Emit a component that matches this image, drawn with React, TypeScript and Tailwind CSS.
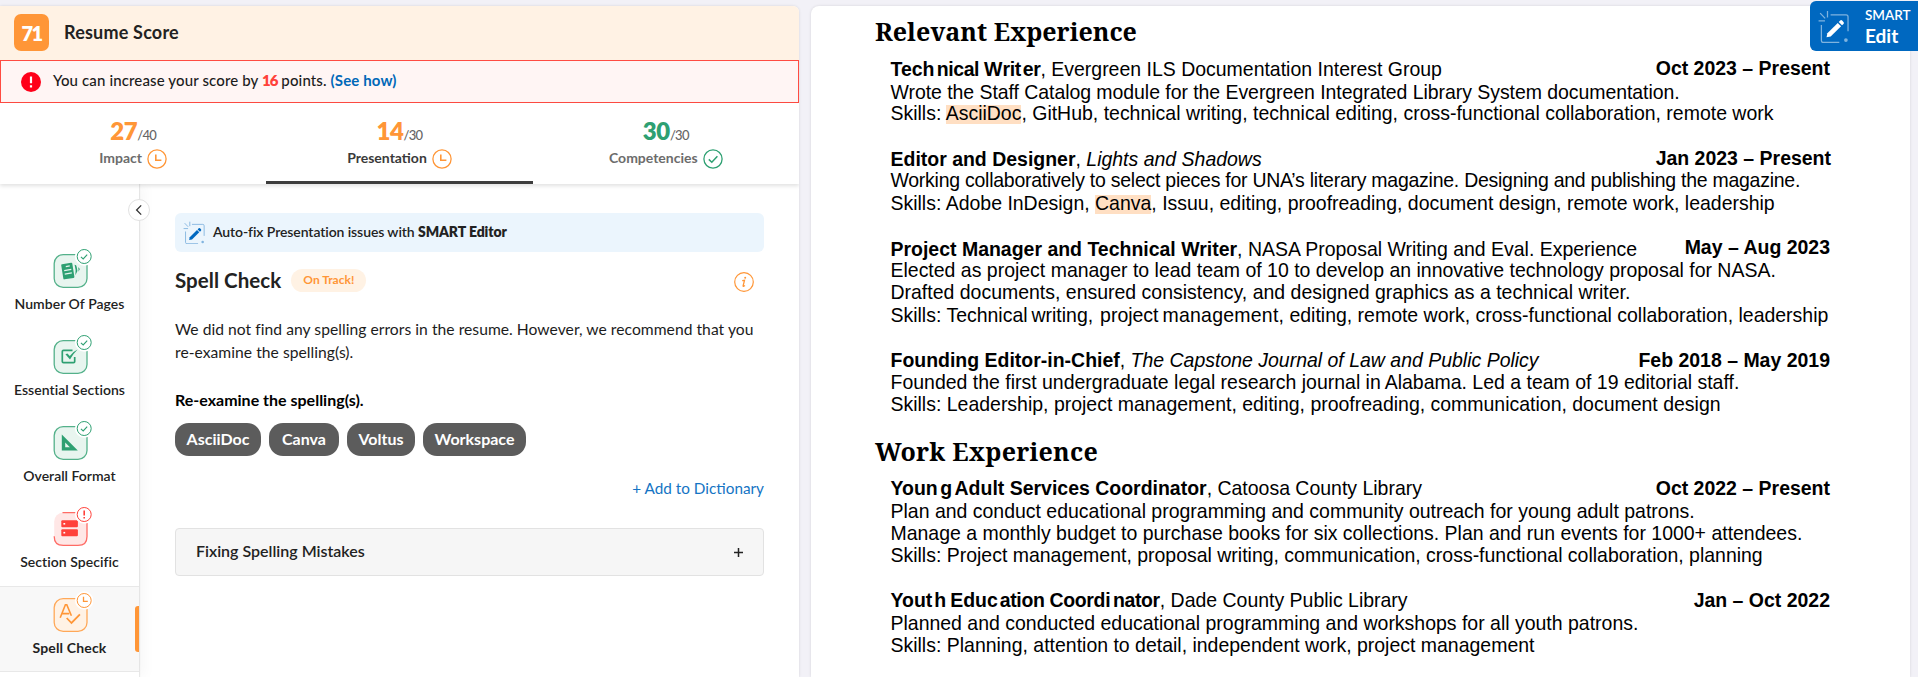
import React from 'react';
import type { ReactNode } from 'react';
import { clsx } from 'clsx';

function ClockIcon({ className }: { className?: string }) {
  return (
    <svg viewBox="0 0 20 20" className={className} fill="none" stroke="currentColor">
      <circle cx="10" cy="10" r="9.1" strokeWidth="1.3" fill="#fff" />
      <path d="M8.8 5.4v5.9h5.6" strokeWidth="1.6" />
    </svg>
  );
}

function CheckIcon({ className }: { className?: string }) {
  return (
    <svg viewBox="0 0 20 20" className={className} fill="none" stroke="currentColor">
      <circle cx="10" cy="10" r="9.1" strokeWidth="1.3" fill="#fff" />
      <path d="M5.8 10.4l3 2.8 5.6-6" strokeWidth="1.5" />
    </svg>
  );
}

function SmartIcon({ className, pen, frame }: { className?: string; pen: string; frame: string }) {
  return (
    <svg viewBox="0 0 32 34" className={className} fill="none">
      <g stroke={frame} strokeWidth="1.3">
        <path d="M2.2 3.2l5.2 5.4M9.8 1v6.6M0.6 11.2h6.6" />
        <path d="M13 5h16q2 0 2 2v15M3.5 15.5v16q0 2 2 2H22" />
      </g>
      <circle cx="28.8" cy="31" r="1.9" fill={frame} />
      <path d="M8.8 28.2l.9-4.3L20.4 13.4l3.4 3.4L13.1 27.3z" fill={pen} />
      <path d="M21.4 12.4l1.5-1.5q1-1 2 0l1.4 1.4q1 1 0 2l-1.5 1.5z" fill={pen} />
    </svg>
  );
}

type Tone = 'green' | 'red' | 'orange';

const tones: Record<Tone, { stroke: string; border: string; fill: string }> = {
  green: { stroke: '#2ea072', border: '#54b18a', fill: '#e8f5ef' },
  red: { stroke: '#ff413a', border: '#ff6b65', fill: '#ffe7e6' },
  orange: { stroke: '#ff9637', border: '#ffa858', fill: '#fff2e5' },
};

const glyphs: Record<string, ReactNode> = {
  pages: (
    <g>
      <g transform="rotate(-9 19 24)">
        <rect x="13.2" y="16.3" width="11.2" height="15.4" rx="1" fill="#2ea072" />
        <path d="M17.5 19.3h4M15.3 23h7.2M15.3 26.5h7.2" stroke="#e8f5ef" strokeWidth="1.2" />
      </g>
      <path d="M25.6 17.8q1.6 5.2.8 10.4l2-4.2q-.3-4.2-1.3-5.8zM29.2 20.2q.6 2.4.1 4.600l1.500-2.600q-.5-1.500-1.600-2z" fill="#2ea072" />
    </g>
  ),
  sections: (
    <g fill="none">
      <path d="M23.5 17.3H14.500q-1.200 0-1.200 1.200v10q0 1.200 1.200 1.200h10q1.200 0 1.200-1.200v-4.500" stroke="#2ea072" strokeWidth="1.7" />
      <path d="M16.400 21.300l2-.8 2.400 2.400q3-4.200 7.800-6.400-4.600 4.400-7.600 10z" fill="#2ea072" />
    </g>
  ),
  format: (
    <path fillRule="evenodd" d="M12.8 15.500v16h16zM16.200 23.600l4.700 4.700h-4.700z" fill="#2ea072" />
  ),
  specific: (
    <g fill="#ff413a">
      <rect x="12.3" y="15.3" width="16.6" height="7" rx="1" />
      <rect x="12.3" y="24.2" width="16.6" height="7" rx="1" />
      <rect x="14.4" y="18" width="1.8" height="1.6" fill="#fff" />
      <rect x="14.4" y="26.9" width="1.8" height="1.6" fill="#fff" />
    </g>
  ),
  spell: (
    <g>
      <path d="M11.2 26.800l5.200-13h1.400l4.600 11M13.200 22.600h7" fill="none" stroke="#ff9637" strokeWidth="1.6" />
      <path d="M17.7 27l4.800 5 8.400-8.600" fill="none" stroke="#ff9637" strokeWidth="1.8" />
    </g>
  ),
};

function SideIcon({ tone, kind }: { tone: Tone; kind: string }) {
  const c = tones[tone];
  return (
    <svg viewBox="0 0 44 42" className="ml-0.5 h-[42px] w-[44px]">
      <rect x="5.2" y="7.6" width="32.8" height="32.8" rx="9" fill={c.fill} stroke={tone === 'red' ? 'none' : c.border} strokeWidth="1.3" />
      {tone === 'red' && (
        <path d="M13.5 7.600H29Q38 7.600 38 16.600V31.400q0 9-9 9H14.200q-9 0-9-9.200" fill="none" stroke={c.border} strokeWidth="1.3" />
      )}
      {glyphs[kind]}
      <circle cx="35.2" cy="9.5" r="9.3" fill="#fff" />
      <g fill="none" stroke={c.stroke} strokeWidth="1.1">
        <circle cx="35.2" cy="9.5" r="7" strokeWidth="1" />
        {tone === 'green' && <path d="M31.900 9.900l2.300 2 4-4.300" />}
        {tone === 'red' && <path d="M35.200 5.600v4.800M35.200 11.900v1.700" strokeWidth="1.6" />}
        {tone === 'orange' && <path d="M34.500 5.800v4.500h4.300" strokeWidth="1.3" />}
      </g>
    </svg>
  );
}

const sideItems: { label: string; tone: Tone; kind: string; track: string; active?: boolean }[] = [
  { label: 'Number Of Pages', tone: 'green', kind: 'pages', track: 'tracking-[0.05px]' },
  { label: 'Essential Sections', tone: 'green', kind: 'sections', track: 'tracking-[0.05px]' },
  { label: 'Overall Format', tone: 'green', kind: 'format', track: '' },
  { label: 'Section Specific', tone: 'red', kind: 'specific', track: 'tracking-[0.05px]' },
  { label: 'Spell Check', tone: 'orange', kind: 'spell', track: 'tracking-[0.15px]', active: true },
];

function Sidebar() {
  return (
    <nav className="relative z-10 w-[139px] shrink-0 bg-white pt-[58px] shadow-[1px_0_1px_rgba(0,0,0,0.08),6px_0_12px_rgba(0,0,0,0.03)]">
      {sideItems.map((item) => (
        <div
          key={item.label}
          className={clsx(
            'relative flex h-[86px] flex-col items-center border-y pt-1',
            item.active ? 'border-[#e8e8e8] bg-[#f8f8f8]' : 'border-transparent',
          )}
        >
          <SideIcon tone={item.tone} kind={item.kind} />
          <span
            className={clsx(
              'mt-[5px] text-[14px] leading-5 whitespace-nowrap text-[#222]',
              item.active ? 'font-bold' : 'font-semibold',
              item.track,
            )}
          >
            {item.label}
          </span>
          {item.active && <span className="absolute top-[19px] right-0 h-[46px] w-1 rounded-l-[3px] bg-[#ff9637]" />}
        </div>
      ))}
      <button className="absolute top-[15px] left-[128px] flex size-[22px] items-center justify-center rounded-full border border-[#e2e2e2] bg-white text-[#333]">
        <svg viewBox="0 0 10 12" className="h-3 w-2.5" fill="none" stroke="currentColor" strokeWidth="1.3">
          <path d="M7.200 1.400L2.600 6l4.600 4.600" />
        </svg>
      </button>
    </nav>
  );
}

function ScoreTab({ score, total, label, active, good }: { score: string; total: string; label: string; active?: boolean; good?: boolean }) {
  return (
    <div className={clsx('flex flex-1 flex-col items-center border-b-[3px] pt-4', active ? 'border-[#3d3d3d]' : 'border-transparent')}>
      <div className="flex h-6 items-baseline leading-6">
        <span className={clsx('text-[24px] leading-6 font-extrabold tracking-[-0.4px]', good ? 'text-[#2ea072]' : 'text-[#ff9637]')}>{score}</span>
        <span className="text-[13px] leading-4 font-medium tracking-[-0.7px] text-[#666]">/{total}</span>
      </div>
      <div className="mt-1.5 flex h-5 items-center gap-[5px]">
        <span className={clsx('-mt-0.5 text-[14px] leading-5 font-bold', active ? 'text-[#3a3a3a]' : 'text-[#6c6c6c]')}>{label}</span>
        {good ? <CheckIcon className="size-5 text-[#2ea072]" /> : <ClockIcon className="size-5 text-[#ff9637]" />}
      </div>
    </div>
  );
}

function Chip({ children, width }: { children: ReactNode; width: string }) {
  return (
    <span className={clsx('flex h-[33px] items-center justify-center rounded-[14px] bg-[#5c5c5c] pb-px text-[16px] font-bold text-white', width)}>
      {children}
    </span>
  );
}

function ScorePanel() {
  return (
    <section className="flex w-[799px] shrink-0 flex-col overflow-hidden rounded-tr-md bg-white font-['Lato',sans-serif] shadow-[0_0_3px_rgba(0,0,0,0.12)]">
      <header className="flex h-[54px] shrink-0 items-start bg-[#fff2e4] pt-2 pl-3.5">
        <div className="flex h-[37px] w-[35px] items-center justify-center rounded-[7px] bg-[#ff9637] text-[20px] font-extrabold tracking-[-1.5px] text-white">71</div>
        <h1 className="ml-[15px] text-[18px] leading-[37px] font-bold tracking-[0.2px] text-[#222]">Resume Score</h1>
      </header>
      <div className="flex h-[43px] shrink-0 items-center border border-[#ff4b42] bg-[#fff5f4] pl-5">
        <svg viewBox="0 0 20 20" className="size-5">
          <circle cx="10" cy="10" r="10" fill="#ff0019" />
          <path d="M10 4.600v6.600M10 13.200v2.300" stroke="#fff" strokeWidth="2.2" />
        </svg>
        <p className="ml-3 -mt-0.5 text-[15px] font-medium tracking-[0.13px] text-[#1c1c1c]">
          You can increase your score by <b className="font-extrabold tracking-[-1px] text-[#ff413a]">16</b> points. <b className="font-bold text-[#0068b8]">(See how)</b>
        </p>
      </div>
      <div className="relative z-20 flex h-[81px] shrink-0 bg-white shadow-[0_2px_4px_rgba(0,0,0,0.12)]">
        <ScoreTab score="27" total="40" label="Impact" />
        <ScoreTab score="14" total="30" label="Presentation" active />
        <ScoreTab score="30" total="30" label="Competencies" good />
      </div>
      <div className="flex min-h-0 flex-1">
        <Sidebar />
        <main className="flex-1 pt-[29px] pr-[35px] pl-9 text-[#1c1c1c]">
          <div className="flex h-[39px] items-center rounded-md bg-[#ebf5fd] pl-2 text-[14px]">
            <SmartIcon className="h-[23px] w-[22px]" pen="#0068c0" frame="#82b4df" />
            <p className="ml-2 -mt-[3px] font-semibold tracking-[-0.09px] text-[#222]">
              Auto-fix Presentation issues with <b className="font-extrabold">SMART Editor</b>
            </p>
          </div>
          <div className="mt-3.5 flex h-7 items-center">
            <h2 className="text-[20.5px] font-bold tracking-[0.05px] text-[#222]">Spell Check</h2>
            <span className="ml-2.5 flex h-[23px] w-[75px] items-center justify-center rounded-full bg-[#fff2e4] text-[12px] font-bold text-[#ff9637]">On Track!</span>
            <svg viewBox="0 0 20 20" className="mt-1 mr-2.5 ml-auto size-5 text-[#ff9637]" fill="none" stroke="currentColor">
              <circle cx="10" cy="10" r="9.3" strokeWidth="1.2" />
              <path d="M8.200 8.700l2.300-.4-1.400 5.600q0 1 1.900-.4" strokeWidth="1.3" />
              <circle cx="11.2" cy="5.7" r="1" fill="currentColor" stroke="none" />
            </svg>
          </div>
          <p className="mt-6 text-[15.65px] leading-[23px] tracking-[0.035px] whitespace-nowrap">
            We did not find any spelling errors in the resume. However, we recommend that you
            <br />
            re-examine the spelling(s).
          </p>
          <h3 className="mt-6 text-[16px] leading-6 font-bold text-black">Re-examine the spelling(s).</h3>
          <div className="mt-[11px] flex gap-2">
            <Chip width="w-[86px]">AsciiDoc</Chip>
            <Chip width="w-[70px]">Canva</Chip>
            <Chip width="w-[68px]">Voltus</Chip>
            <Chip width="w-[103px]">Workspace</Chip>
          </div>
          <a className="mt-5 block text-right text-[15.3px] leading-6 text-[#1474c4]">+ Add to Dictionary</a>
          <div className="mt-7 flex h-12 items-center rounded border border-[#e2e2e2] bg-[#f6f6f6] px-5 text-[16px] font-semibold text-[#222]">
            <span className="-mt-0.5">Fixing Spelling Mistakes</span>
            <svg viewBox="0 0 9 9" className="ml-auto size-[9px]" stroke="currentColor" strokeWidth="1.5">
              <path d="M4.500 0v9M0 4.500h9" />
            </svg>
          </div>
        </main>
      </div>
    </section>
  );
}

function Row({ children, date, h = 'h-[22px]', dateShift = 'mr-px' }: { children: ReactNode; date?: string; h?: string; dateShift?: string }) {
  return (
    <div className={clsx('flex justify-between leading-[22px] whitespace-pre', h)}>
      <div>{children}</div>
      {date && <b className={dateShift}>{date}</b>}
    </div>
  );
}

function Heading({ children, h }: { children: ReactNode; h: string }) {
  return <h2 className={clsx("-ml-[15.5px] font-['Noto_Serif',serif] text-[25px] leading-[30px] font-bold", h)}>{children}</h2>;
}

function Mark({ children }: { children: ReactNode }) {
  return <mark className="bg-[linear-gradient(#ffdfc3,#ffdfc3)] bg-transparent bg-[length:100%_19px] bg-[position:0_3px] bg-no-repeat text-black">{children}</mark>;
}

function Resume() {
  return (
    <article className="ml-3 w-[1099px] overflow-hidden rounded-t-lg bg-white pt-2.5 pr-[79px] pl-[79.5px] font-['Liberation_Sans',Arial,sans-serif] text-[19.48px] text-black shadow-[0_0_3px_rgba(0,0,0,0.12)]">
      <Heading h="h-[42px]">Relevant Experience</Heading>

      <Row h="h-[23px]" date="Oct 2023 – Present" dateShift="mr-px -mt-px">
        <b>Tec<span className="tracking-[2.2px]">h</span><span className="tracking-[-0.4px]">nical </span>W<span className="tracking-[-0.3px]">ri</span><span className="tracking-[1.5px]">t</span><span className="tracking-[-0.4px]">er</span></b>, Evergreen ILS Documentation Interest Group
      </Row>
      <Row h="h-[21px]"><span className="tracking-[-0.05px]">Wrote the Staff Catalog module for the Evergreen Integrated Library System documentation.</span></Row>
      <Row h="h-[46px]">Skills: <Mark>AsciiDoc</Mark>, GitHub, technical writing, technical editing, cross-functional collaboration, remote work</Row>

      <Row h="h-[21px]" date="Jan 2023 – Present" dateShift="-mt-px"><b>Editor and Designer</b>, <i>Lights and Shadows</i></Row>
      <Row h="h-[23px]"><span className="tracking-[-0.245px]">Working collaboratively to select pieces for UNA’s literary magazine. Designing and publishing the magazine.</span></Row>
      <Row h="h-[46px]">Skills: Adobe InDesign, <Mark>Canva</Mark>, Issuu, editing, proofreading, document design, remote work, leadership</Row>

      <Row h="h-[21px]" date="May – Aug 2023" dateShift="mr-px -mt-0.5"><b>Project Manager and Technical Writer</b>, NASA Proposal Writing and Eval. Experience</Row>
      <Row>Elected as project manager to lead team of 10 to develop an innovative technology proposal for NASA.</Row>
      <Row h="h-[23px]">Drafted documents, ensured consistency, and designed graphics as a technical writer.</Row>
      <Row h="h-[45px]">Skills: Technical<span className="tracking-[-1.5px]"> </span>writing<span className="tracking-[1.5px]">,</span> project<span className="tracking-[-1.5px]"> </span><span className="tracking-[0.25px]">management</span>, editing, remote work, cross-functional collaboration, leadership</Row>

      <Row date="Feb 2018 – May 2019"><b>Founding Editor-in-Chief</b>, <i>The Capstone Journal of Law and Public Policy</i></Row>
      <Row>Founded the first undergraduate legal research journal in<span className="tracking-[-1.5px]"> </span>Alabama. Led a team of 19 editorial staff.</Row>
      <Row h="h-[43px]">Skills: Leadership, project management, editing, proofreading, communication, document design</Row>

      <Heading h="h-[41px] tracking-[0.25px]">Work Experience</Heading>

      <Row h="h-[23px]" date="Oct 2022 – Present">
        <b>You<span className="tracking-[2.5px]">n</span>g<span className="tracking-[-3px]"> </span>Adult Services Coordinator</b>, Catoosa County Library
      </Row>
      <Row>Plan and conduct educational programming and community outreach for young adult patrons.</Row>
      <Row>Manage a monthly budget to purchase books for six collections. Plan and run events for 1000+ attendees.</Row>
      <Row h="h-[45px]">Skills: Project management, proposal writing, communication, cross-functional collaboration, planning</Row>

      <Row h="h-[23px]" date="Jan – Oct 2022">
        <b>You<span className="tracking-[2px]">t</span>h<span className="tracking-[-1.5px]"> </span>Edu<span className="tracking-[2px]">c</span><span className="tracking-[-0.35px]">ation Coord</span><span className="tracking-[2.5px]">i</span><span className="tracking-[-0.4px]">nator</span></b>, Dade County Public Library
      </Row>
      <Row>Planned and conducted educational programming and workshops for all youth patrons.</Row>
      <Row>Skills: Planning, attention to detail, independent work, project management</Row>
    </article>
  );
}

export default function App() {
  return (
    <div className="relative flex h-[677px] w-[1918px] overflow-hidden bg-[#f2f1f7] pt-1.5">
      <ScorePanel />
      <Resume />
      <button className="absolute top-px right-0 z-30 flex h-[50px] w-[108px] items-center rounded-l-md bg-[#0068c0] pl-2 text-left font-['Lato',sans-serif] text-white">
        <SmartIcon className="h-[33px] w-[31px]" pen="#fff" frame="#7fb3df" />
        <span className="ml-4 flex flex-col">
          <span className="text-[13.5px] leading-[18px] font-semibold">SMART</span>
          <span className="text-[19px] leading-[23px] font-bold">Edit</span>
        </span>
      </button>
    </div>
  );
}
